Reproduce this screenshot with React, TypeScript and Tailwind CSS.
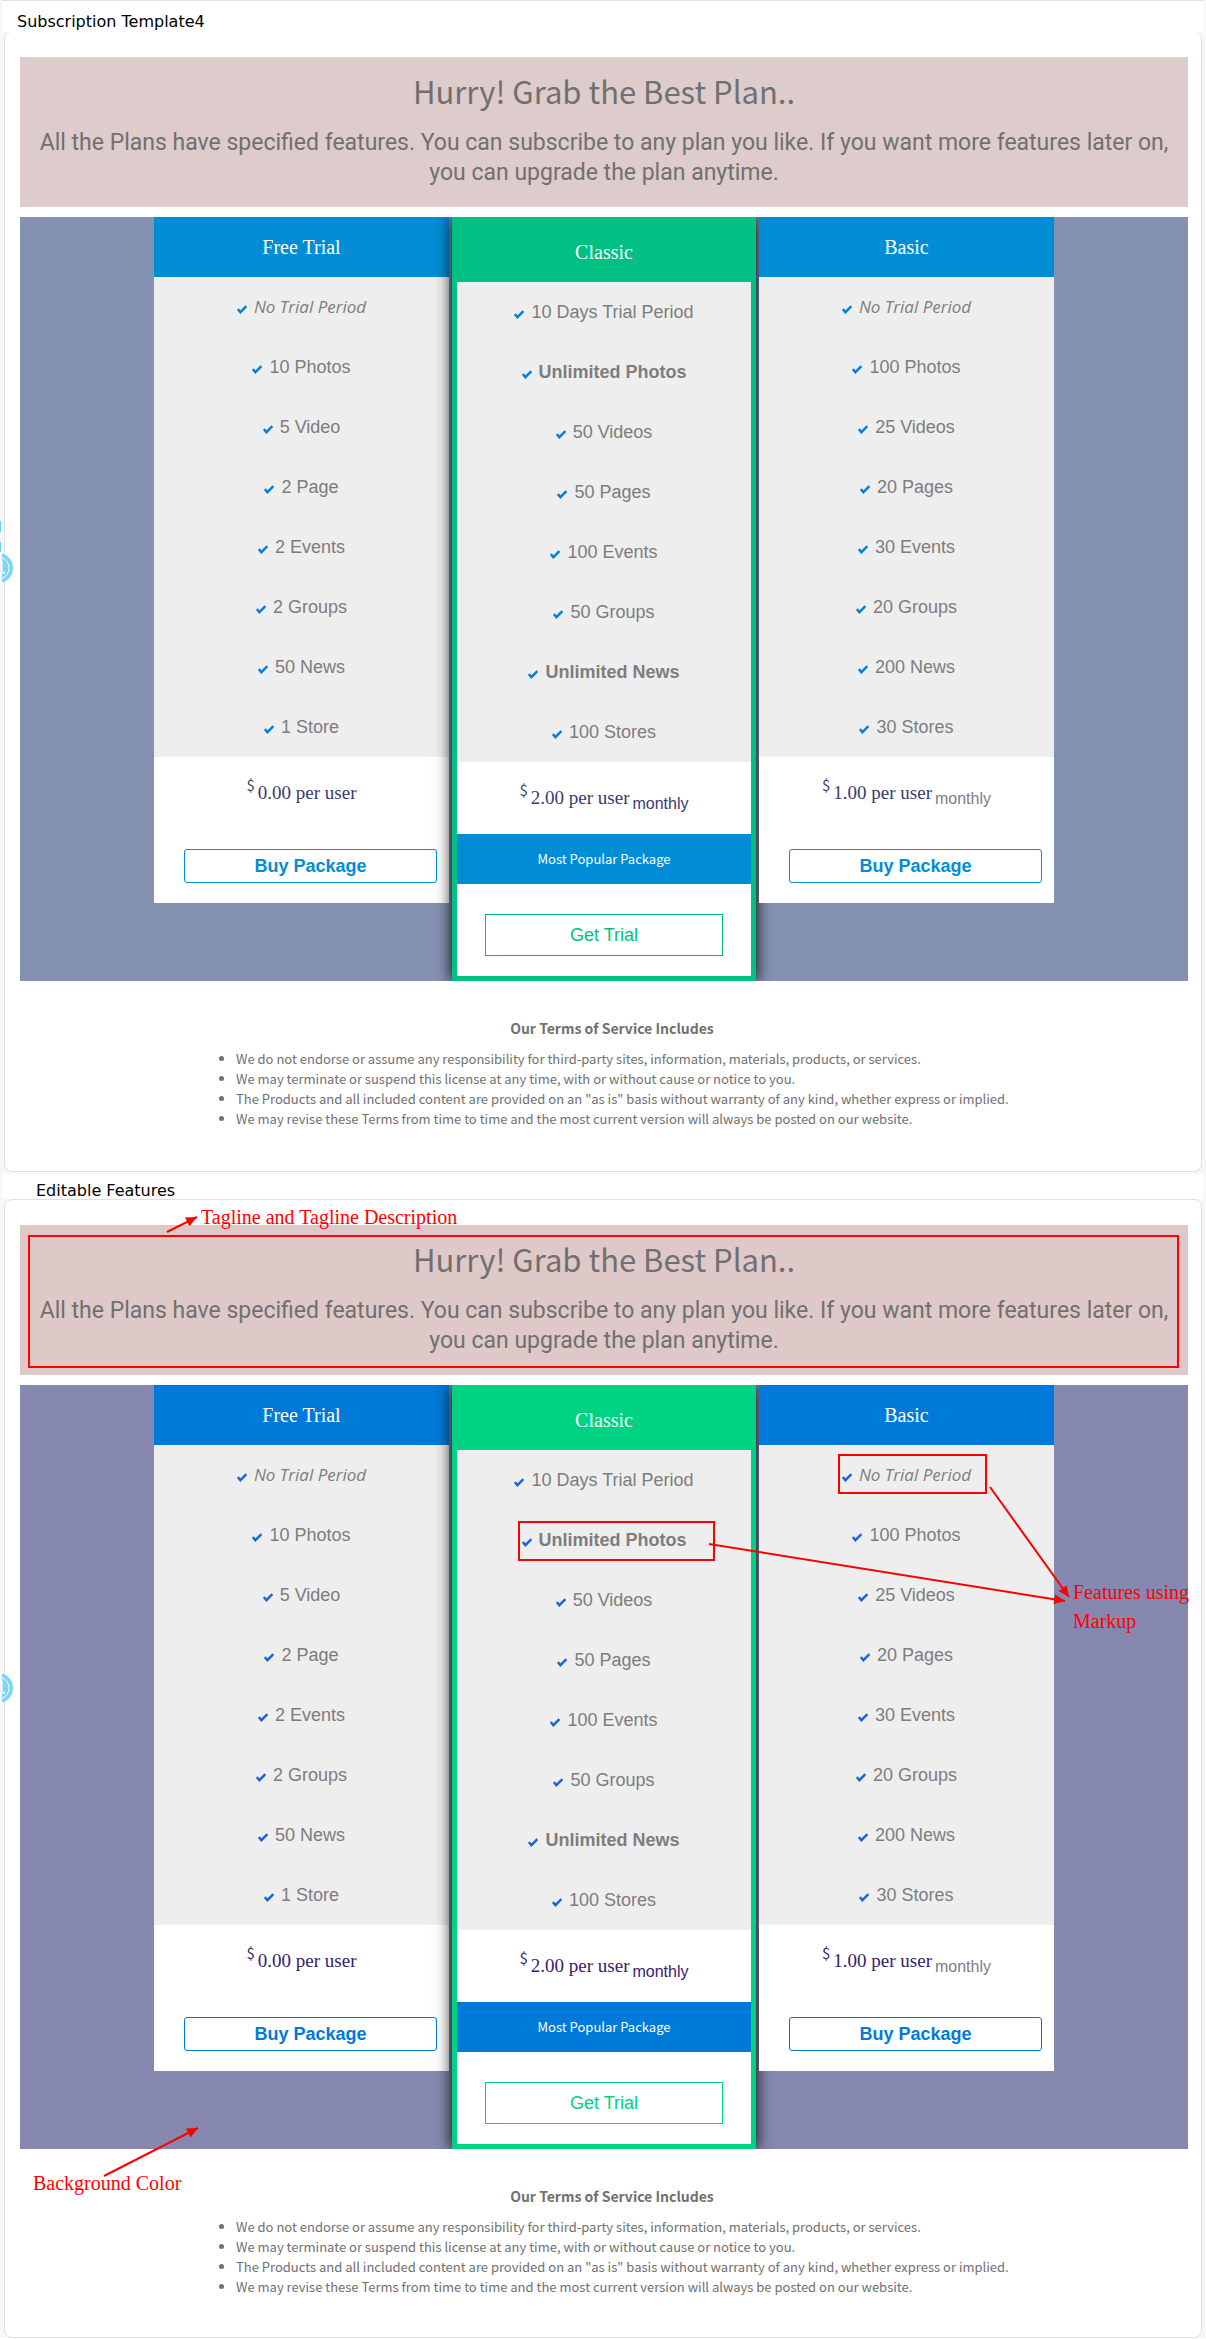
type Theme = {
  banner: string;
  section: string;
  blue: string;
  green: string;
  tick: string;
  price: string;
  buy: string;
  trial: string;
};

type Feature = { text: string; style?: "bold" | "italic"; marked?: string };

type Plan = {
  name: string;
  features: Feature[];
  amount: string;
  period?: string;
};

const themes: Record<"standard" | "edited", Theme> = {
  standard: {
    banner: "bg-[#decbcb]",
    section: "bg-[#8491b1]",
    blue: "bg-[#008dd6]",
    green: "border-[#00c083] bg-[#00c083]",
    tick: "text-[#0080dc]",
    price: "text-[#3a3a70]",
    buy: "border-[#008dd6] text-[#008dd6]",
    trial: "border-[#00c083] text-[#00c083]",
  },
  edited: {
    banner: "bg-[#dfc8c8]",
    section: "bg-[#8688af]",
    blue: "bg-[#007ad8]",
    green: "border-[#00d283] bg-[#00d283]",
    tick: "text-[#1b64dc]",
    price: "text-[#38206e]",
    buy: "border-[#007ad8] text-[#007ad8]",
    trial: "border-[#00d283] text-[#00d283]",
  },
};

const free: Plan = {
  name: "Free Trial",
  features: [
    { text: "No Trial Period", style: "italic" },
    { text: "10 Photos" },
    { text: "5 Video" },
    { text: "2 Page" },
    { text: "2 Events" },
    { text: "2 Groups" },
    { text: "50 News" },
    { text: "1 Store" },
  ],
  amount: "0.00 per user",
};

const classic: Plan = {
  name: "Classic",
  features: [
    { text: "10 Days Trial Period" },
    { text: "Unlimited Photos", style: "bold", marked: "-left-1 -right-7 top-[11px] h-10" },
    { text: "50 Videos" },
    { text: "50 Pages" },
    { text: "100 Events" },
    { text: "50 Groups" },
    { text: "Unlimited News", style: "bold" },
    { text: "100 Stores" },
  ],
  amount: "2.00 per user",
  period: "monthly",
};

const basic: Plan = {
  name: "Basic",
  features: [
    { text: "No Trial Period", style: "italic", marked: "-left-1 -right-4 top-[9px] h-10" },
    { text: "100 Photos" },
    { text: "25 Videos" },
    { text: "20 Pages" },
    { text: "30 Events" },
    { text: "20 Groups" },
    { text: "200 News" },
    { text: "30 Stores" },
  ],
  amount: "1.00 per user",
  period: "monthly",
};

const terms = [
  "We do not endorse or assume any responsibility for third-party sites, information, materials, products, or services.",
  "We may terminate or suspend this license at any time, with or without cause or notice to you.",
  'The Products and all included content are provided on an "as is" basis without warranty of any kind, whether express or implied.',
  "We may revise these Terms from time to time and the most current version will always be posted on our website.",
];

function Tick({ className }: { className: string }) {
  return (
    <svg className={`mt-1 h-[9px] w-[10px] shrink-0 ${className}`} viewBox="0 0 10 9" fill="none" aria-hidden="true">
      <path d="M.8 4 3.4 7.2 9.4 1.2" stroke="currentColor" strokeWidth="2.5" />
    </svg>
  );
}

function Features({ plan, theme, annotated }: { plan: Plan; theme: Theme; annotated: boolean }) {
  return (
    <ul className="bg-[#eeeeee] text-lg text-[#7d7d7d]">
      {plan.features.map((f) => (
        <li key={f.text} className="flex h-[60px] justify-center">
          <span className="relative flex items-center gap-[7px]">
            <Tick className={theme.tick} />
            {f.style === "bold" ? (
              <b>{f.text}</b>
            ) : f.style === "italic" ? (
              <i className="font-['Open_Sans',sans-serif] text-[17px]">{f.text}</i>
            ) : (
              <span>{f.text}</span>
            )}
            {annotated && f.marked && <span className={`absolute border-2 border-[#ff0000] ${f.marked}`} />}
          </span>
        </li>
      ))}
    </ul>
  );
}

function Price({ plan, theme, tintPeriod }: { plan: Plan; theme: Theme; tintPeriod?: boolean }) {
  return (
    <p className={`flex h-[72px] items-center justify-center gap-[3px] ${theme.price}`}>
      <span className="-mt-4 font-['Noto_Sans_CJK_SC',sans-serif] text-[15px]">$</span>
      <span className="font-['Liberation_Serif',serif] text-[19px]">{plan.amount}</span>
      {plan.period && <span className={`mt-3 text-base ${tintPeriod ? "" : "text-[#7d7d7d]"}`}>{plan.period}</span>}
    </p>
  );
}

function PlanName({ name, className }: { name: string; className: string }) {
  return (
    <h3 className={`flex h-[60px] items-center justify-center font-['Liberation_Serif',serif] text-xl text-white ${className}`}>
      {name}
    </h3>
  );
}

function SideCard({ plan, theme, annotated, className = "" }: { plan: Plan; theme: Theme; annotated: boolean; className?: string }) {
  return (
    <article className={`min-w-0 flex-1 bg-white pb-5 ${className}`}>
      <PlanName name={plan.name} className={theme.blue} />
      <Features plan={plan} theme={theme} annotated={annotated} />
      <Price plan={plan} theme={theme} />
      <div className="pt-5 pr-3 pl-[30px]">
        <button type="button" className={`h-[34px] w-full rounded-[3px] border bg-white text-lg font-bold ${theme.buy}`}>
          Buy Package
        </button>
      </div>
    </article>
  );
}

function Template({ theme, annotated = false }: { theme: Theme; annotated?: boolean }) {
  return (
    <>
      <header className={`relative h-[150px] px-2 pt-3 text-center text-[#707070] ${theme.banner}`}>
        <h1 className="font-['Noto_Sans_CJK_SC',sans-serif] text-[31px] leading-[44px]">Hurry! Grab the Best Plan..</h1>
        <p className="mt-[15px] font-['Roboto',sans-serif] text-[23px] leading-[30px]">
          All the Plans have specified features. You can subscribe to any plan you like. If you want more features later on,
          you can upgrade the plan anytime.
        </p>
        {annotated && <span className="absolute top-[10px] right-[9px] bottom-[7px] left-2 border-2 border-[#ff0000]" />}
      </header>

      <section className={`mt-[10px] overflow-hidden ${theme.section}`}>
        <div className="mx-auto flex max-w-[900px] items-start gap-[3px]">
          <SideCard plan={free} theme={theme} annotated={annotated} />
          <article className={`relative w-[304px] border-5 shadow-[0_0_15px_#000] ${theme.green}`}>
            <PlanName name={classic.name} className="" />
            <div className="bg-white pb-5">
              <Features plan={classic} theme={theme} annotated={annotated} />
              <Price plan={classic} theme={theme} tintPeriod />
              <p className={`h-[50px] text-center font-['Noto_Sans_CJK_SC',sans-serif] text-[13px] leading-[50px] text-white ${theme.blue}`}>
                Most Popular Package
              </p>
              <div className="px-7 pt-[30px]">
                <button type="button" className={`h-[42px] w-full border bg-white text-lg ${theme.trial}`}>
                  Get Trial
                </button>
              </div>
            </div>
          </article>
          <SideCard plan={basic} theme={theme} annotated={annotated} className="relative" />
        </div>
      </section>

      <footer className="mx-auto max-w-[800px] pt-[35px] pb-10 font-['Noto_Sans_CJK_SC',sans-serif] text-[#707070]">
        <h2 className="pl-4 text-center text-sm leading-6 font-bold">Our Terms of Service Includes</h2>
        <ul className="mt-[9px] list-disc pl-8 text-[13px] leading-5 whitespace-nowrap">
          {terms.map((t) => (
            <li key={t}>{t}</li>
          ))}
        </ul>
      </footer>
    </>
  );
}

function SideBadge({ className, tail = false }: { className: string; tail?: boolean }) {
  return (
    <svg className={`absolute -left-[5px] h-16 w-4 ${className}`} viewBox="0 0 16 64" fill="none" aria-hidden="true">
      {tail && <path d="M0 1h1v11H0zM0 22h1v10H0z" fill="#6dcff6" />}
      <path d="M2 33.5A15 15 0 0 1 2 62.5Z" fill="#7dd5f7" />
      <path d="M2 37.8A11 11 0 0 1 2 58.2M2 41v8c0 2 1 3 3 4H2" stroke="#fff" />
    </svg>
  );
}

function Arrows() {
  return (
    <svg className="pointer-events-none absolute top-0 -left-[5px] h-[1000px] w-[1206px]" viewBox="0 0 1206 1000" aria-hidden="true">
      <defs>
        <marker id="head" markerUnits="userSpaceOnUse" markerWidth="12" markerHeight="10" refX="11" refY="5" orient="auto">
          <path d="M0 0 11 5 0 10Z" fill="#ff0000" />
        </marker>
      </defs>
      <g stroke="#ff0000" strokeWidth="2">
        <path d="M167 32 197 17" markerEnd="url(#head)" />
        <path d="M990 287 1069 397" markerEnd="url(#head)" />
        <path d="M709 344 1065 401" markerEnd="url(#head)" />
        <path d="M104 976 198 928" markerEnd="url(#head)" />
      </g>
    </svg>
  );
}

function Note({ children, className }: { children: string; className: string }) {
  return (
    <p className={`absolute font-['Liberation_Serif',serif] text-xl leading-[29px] text-[#ff0000] ${className}`}>{children}</p>
  );
}

export default function App() {
  return (
    <div className="relative overflow-hidden bg-[#f7f7f7] px-[2px] font-['Liberation_Sans',Arial,sans-serif]">
      <h2 className="h-8 border-t border-[#e0e0e0] bg-white pt-[9px] pl-[15px] font-['DejaVu_Sans',sans-serif] text-base text-black">
        Subscription Template4
      </h2>
      <main className="relative mx-[2px] rounded-lg border border-t-0 border-[#e0e0e0] bg-white pt-[25px] pr-[13px] pb-[2px] pl-[15px]">
        <Template theme={themes.standard} />
        <SideBadge className="top-[488px]" tail />
      </main>
      <h2 className="mt-[2px] h-[25px] bg-white pt-1 pl-[34px] font-['DejaVu_Sans',sans-serif] text-base leading-[25px] text-black">
        Editable Features
      </h2>
      <section className="relative mx-[2px] rounded-lg border border-[#e0e0e0] bg-white pt-[25px] pr-[13px] pl-[15px]">
        <Template theme={themes.edited} annotated />
        <SideBadge className="top-[440px]" />
        <Arrows />
        <Note className="top-[3px] left-[196px]">Tagline and Tagline Description</Note>
        <Note className="top-[378px] right-0 w-[128px]">Features using Markup</Note>
        <Note className="top-[969px] left-7">Background Color</Note>
      </section>
    </div>
  );
}
